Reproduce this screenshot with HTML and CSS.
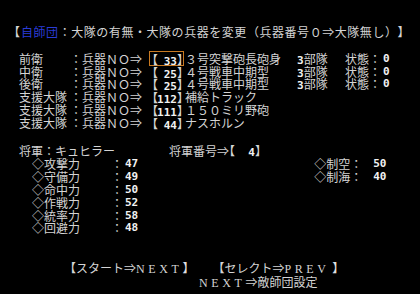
FILE: index.html
```html
<!DOCTYPE html>
<html lang="ja">
<head>
<meta charset="UTF-8">
<title>師団編成</title>
<link rel="stylesheet" href="styles.css">
</head>
<body>
<div class="screen">
  <div class="title"><span class="hb">【</span><span class="own">自師団</span>：大隊の有無・大隊の兵器を変更（兵器番号０⇒大隊無し）<span class="hb">】</span></div>

  <div class="units">
    <div class="row">
      <span class="lbl">前衛</span><span class="fix">：兵器ＮＯ⇒</span>
      <span class="no sel"><span class="hb">【</span><span class="num"> 33</span><span class="hb">】</span></span>
      <span class="name">３号突撃砲長砲身</span>
      <span class="cnt"><span class="num">3</span>部隊</span><span class="st">状態：</span><span class="num">0</span>
    </div>
    <div class="row">
      <span class="lbl">中衛</span><span class="fix">：兵器ＮＯ⇒</span>
      <span class="no"><span class="hb">【</span><span class="num"> 25</span><span class="hb">】</span></span>
      <span class="name">４号戦車中期型</span>
      <span class="cnt"><span class="num">3</span>部隊</span><span class="st">状態：</span><span class="num">0</span>
    </div>
    <div class="row">
      <span class="lbl">後衛</span><span class="fix">：兵器ＮＯ⇒</span>
      <span class="no"><span class="hb">【</span><span class="num"> 25</span><span class="hb">】</span></span>
      <span class="name">４号戦車中期型</span>
      <span class="cnt"><span class="num">3</span>部隊</span><span class="st">状態：</span><span class="num">0</span>
    </div>
    <div class="row">
      <span class="lbl">支援大隊</span><span class="fix">：兵器ＮＯ⇒</span>
      <span class="no"><span class="hb">【</span><span class="num">112</span><span class="hb">】</span></span>
      <span class="name">補給トラック</span>
    </div>
    <div class="row">
      <span class="lbl">支援大隊</span><span class="fix">：兵器ＮＯ⇒</span>
      <span class="no"><span class="hb">【</span><span class="num">111</span><span class="hb">】</span></span>
      <span class="name">１５０ミリ野砲</span>
    </div>
    <div class="row">
      <span class="lbl">支援大隊</span><span class="fix">：兵器ＮＯ⇒</span>
      <span class="no"><span class="hb">【</span><span class="num"> 44</span><span class="hb">】</span></span>
      <span class="name">ナスホルン</span>
    </div>
  </div>

  <div class="general">
    <div class="row">
      <span class="gname">将軍：キュヒラー</span>
      <span>将軍番号⇒<span class="hb">【</span><span class="num">  4</span><span class="hb">】</span></span>
    </div>
    <div class="stats">
      <div class="col">
        <div class="stat"><span class="sl">◇攻撃力</span><span class="sc">：</span><span class="num">47</span></div>
        <div class="stat"><span class="sl">◇守備力</span><span class="sc">：</span><span class="num">49</span></div>
        <div class="stat"><span class="sl">◇命中力</span><span class="sc">：</span><span class="num">50</span></div>
        <div class="stat"><span class="sl">◇作戦力</span><span class="sc">：</span><span class="num">52</span></div>
        <div class="stat"><span class="sl">◇統率力</span><span class="sc">：</span><span class="num">58</span></div>
        <div class="stat"><span class="sl">◇回避力</span><span class="sc">：</span><span class="num">48</span></div>
      </div>
      <div class="col right">
        <div class="stat"><span class="sl2">◇制空</span><span class="sc">：</span><span class="num">50</span></div>
        <div class="stat"><span class="sl2">◇制海</span><span class="sc">：</span><span class="num">40</span></div>
      </div>
    </div>
  </div>

  <div class="keys">
    <div class="line">【スタート⇒<span class="lat">NEXT</span><span class="cb">】</span><span class="gap"></span>【セレクト⇒<span class="lat">PREV</span> <span class="cb">】</span></div>
    <div class="line next"><span class="lat">NEXT</span>⇒敵師団設定</div>
  </div>
</div>
</body>
</html>
```

FILE: styles.css
```css
body {
  margin: 0;
  background-color: #000;
}

.screen {
  width: 420px;
  height: 294px;
  box-sizing: border-box;
  padding-top: 26px;
  font-family: "Noto Sans CJK JP", sans-serif;
  font-size: 12px;
  line-height: 12.8px;
  color: #d4d4d4;
  white-space: nowrap;
  overflow: hidden;
}

.hb {
  display: inline-block;
  width: 6px;
  overflow: visible;
}

.hb:first-child {
  text-indent: -6px;
}

.title {
  padding-left: 14px;
  letter-spacing: 0.55px;
}

.own {
  color: #2a3cd8;
  margin-left: 1px;
}

.num {
  font-family: "DejaVu Sans Mono", monospace;
  font-weight: bold;
  font-size: 11px;
  color: #f2f2f2;
  white-space: pre;
}

.units {
  margin-top: 14px;
}

.row {
  display: flex;
  padding-left: 19px;
  height: 12.8px;
}

.lbl {
  width: 51px;
}

.no {
  box-sizing: border-box;
  width: 35px;
  height: 15px;
  margin-top: -2px;
  margin-left: 7px;
  padding-top: 2px;
  padding-left: 1px;
  border: 1px solid transparent;
}

.no .hb:first-child {
  text-indent: -5px;
}

.no.sel {
  border-color: #c97a22;
}

.name {
  width: 112px;
  margin-left: 1px;
}

.cnt {
  width: 48px;
}

.st {
  width: 38px;
}

.general {
  margin-top: 15px;
}

.gname {
  width: 150px;
}

.stats {
  display: flex;
  padding-left: 32px;
  margin-top: 1px;
}

.stat {
  display: flex;
  height: 12.8px;
}

.sl {
  width: 79px;
}

.sc {
  width: 14px;
}

.right {
  margin-left: 176px;
}

.sl2 {
  width: 36px;
}

.right .sc {
  width: 23px;
}

.keys {
  margin-top: 27px;
}

.line {
  height: 14px;
  padding-left: 64px;
}

.cb {
  display: inline-block;
  font-family: "Noto Sans CJK JP", sans-serif;
  color: #e0e0e0;
}

.gap {
  display: inline-block;
  width: 18px;
}

.lat {
  font-family: "Liberation Serif", serif;
  font-size: 12px;
  letter-spacing: 3.6px;
}

.keys .next {
  padding-left: 199px;
}
```
